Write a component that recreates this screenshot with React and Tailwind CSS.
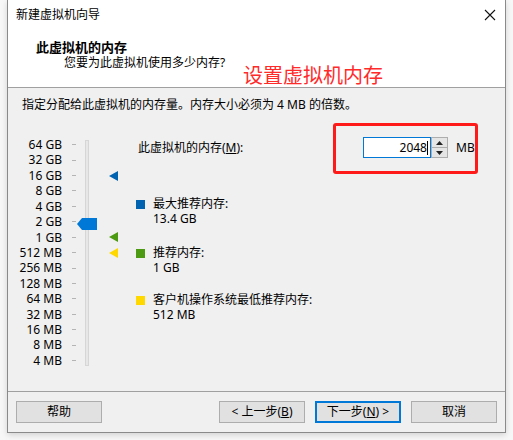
import React from 'react';

const FONT = "font-['Segoe_UI','Noto_Sans','Noto_Sans_CJK_SC',sans-serif]";

const SCALE = ['64 GB', '32 GB', '16 GB', '8 GB', '4 GB', '2 GB', '1 GB', '512 MB', '256 MB', '128 MB', '64 MB', '32 MB', '16 MB', '8 MB', '4 MB'];

// which rows carry a marker triangle
const MARKS = { 2: '#0063b1', 6: '#4b9a12', 7: '#ffd800' };

function Marker({ color }) {
  return (
    <svg width="9" height="10" viewBox="0 0 9 10">
      <polygon points="0,5 9,0 9,10" fill={color} />
    </svg>
  );
}

function Button({ children, primary }) {
  return (
    <div
      className={
        'w-[86px] h-[22px] flex items-center justify-center text-[12px] text-black bg-[#e1e1e1] ' +
        (primary ? 'border-2 border-[#0078d7]' : 'border border-[#adadad]')
      }
    >
      {children}
    </div>
  );
}

function Legend({ color, title, value, className }) {
  return (
    <div className={'flex items-start gap-[8px] ' + className}>
      <div className="w-[9px] h-[9px] mt-[3px]" style={{ background: color }} />
      <div className="text-[12px] leading-[14.5px] text-black">
        <div>{title}</div>
        <div>{value}</div>
      </div>
    </div>
  );
}

export default function App() {
  return (
    <div className={'w-[513px] h-[440px] bg-[#f7f7f7] pl-[7px] ' + FONT}>
      <div className="w-[499px] h-[433px] border-x border-b border-[#8a8a8a] flex flex-col bg-[#f0f0f0] shadow-[0_2px_6px_rgba(0,0,0,0.15)]">
        {/* title + header */}
        <div className="relative h-[88px] bg-white border-b border-[#a0a0a0]">
          <div className="h-[30px] flex items-center justify-between pl-[8px] pr-[8px]">
            <span className="text-[12px] text-black">新建虚拟机向导</span>
            <svg width="12" height="12" viewBox="0 0 12 12" className="mr-[1px]">
              <path d="M1 1 L11 11 M11 1 L1 11" stroke="#111" strokeWidth="1.1" />
            </svg>
          </div>
          <div className="pl-[28px] text-[13px] font-bold leading-[16px] mt-[9px] text-black">此虚拟机的内存</div>
          <div className="pl-[56px] text-[12px] leading-[16px] text-black">您要为此虚拟机使用多少内存?</div>
          <div className="absolute left-[235px] top-[63px] text-[20px] leading-[26px] text-[#ff2a2a]">设置虚拟机内存</div>
        </div>

        {/* body */}
        <div className="h-[303px] pl-[14px] pt-[9px]">
          <div className="text-[12px] leading-[16px] text-black">指定分配给此虚拟机的内存量。内存大小必须为 4 MB 的倍数。</div>

          <div className="flex items-start mt-[24px]">
            {/* scale labels */}
            <div className="w-[40px] flex flex-col items-end">
              {SCALE.map((s) => (
                <div key={s} className="h-[15.43px] leading-[15.43px] text-[12px] text-black whitespace-nowrap">{s}</div>
              ))}
            </div>
            {/* ticks */}
            <div className="ml-[10px] flex flex-col">
              {SCALE.map((s) => (
                <div key={s} className="h-[15.43px] flex items-center">
                  <div className="w-[4px] h-[1px] bg-[#b4b4b4]" />
                </div>
              ))}
            </div>
            {/* track */}
            <div className="relative ml-[9px] mt-[3px] w-[4px] h-[226px] border border-[#d6d6d6] bg-[#e7e7e7]">
              <svg width="20" height="12" viewBox="0 0 20 12" className="absolute left-[-9px] top-[77px]">
                <polygon points="0,6 5,0 20,0 20,12 5,12" fill="#0078d7" />
              </svg>
            </div>
            {/* recommendation markers */}
            <div className="ml-[20px] flex flex-col">
              {SCALE.map((s, i) => (
                <div key={s} className="h-[15.43px] flex items-center">
                  {MARKS[i] ? <Marker color={MARKS[i]} /> : <div className="w-[9px]" />}
                </div>
              ))}
            </div>

            {/* right side */}
            <div className="relative ml-[18px] flex flex-col">
              <div className="flex items-center h-[21px]">
                <div className="w-[227px] pl-[2px] text-[12px] text-black">
                  此虚拟机的内存(<span className="underline">M</span>):
                </div>
                <div className="w-[68px] h-[21px] border border-[#0078d7] bg-white flex items-center justify-end pr-[2px] text-[12px] text-black">
                  2048<span className="w-[1px] h-[14px] bg-black" />
                </div>
                <div className="w-[17px] h-[21px] flex flex-col border border-[#adadad] bg-[#f0f0f0]">
                  <div className="flex-1 flex items-center justify-center border-b border-[#adadad] bg-[#e5e5e5]">
                    <svg width="7" height="4" viewBox="0 0 7 4"><polygon points="0,4 3.5,0 7,4" fill="#222" /></svg>
                  </div>
                  <div className="flex-1 flex items-center justify-center bg-[#e5e5e5]">
                    <svg width="7" height="4" viewBox="0 0 7 4"><polygon points="0,0 7,0 3.5,4" fill="#222" /></svg>
                  </div>
                </div>
                <span className="ml-[8px] text-[12px] text-black">MB</span>
              </div>

              <Legend color="#0063b1" title="最大推荐内存:" value="13.4 GB" className="mt-[39px]" />
              <Legend color="#4b9a12" title="推荐内存:" value="1 GB" className="mt-[20px]" />
              <Legend color="#ffd800" title="客户机操作系统最低推荐内存:" value="512 MB" className="mt-[18px]" />

              {/* annotation box */}
              <div className="absolute left-[197px] top-[-14px] w-[145px] h-[51px] border-[3px] border-[#ff1a1a] rounded-[3px]" />
            </div>
          </div>
        </div>

        {/* footer */}
        <div className="flex-1 border-t border-[#a0a0a0] flex items-start justify-between px-[8px] pt-[9px]">
          <Button>帮助</Button>
          <div className="flex gap-[10px]">
            <Button>&lt; 上一步(<span className="underline">B</span>)</Button>
            <Button primary>下一步(<span className="underline">N</span>) &gt;</Button>
            <Button>取消</Button>
          </div>
        </div>
      </div>
    </div>
  );
}
